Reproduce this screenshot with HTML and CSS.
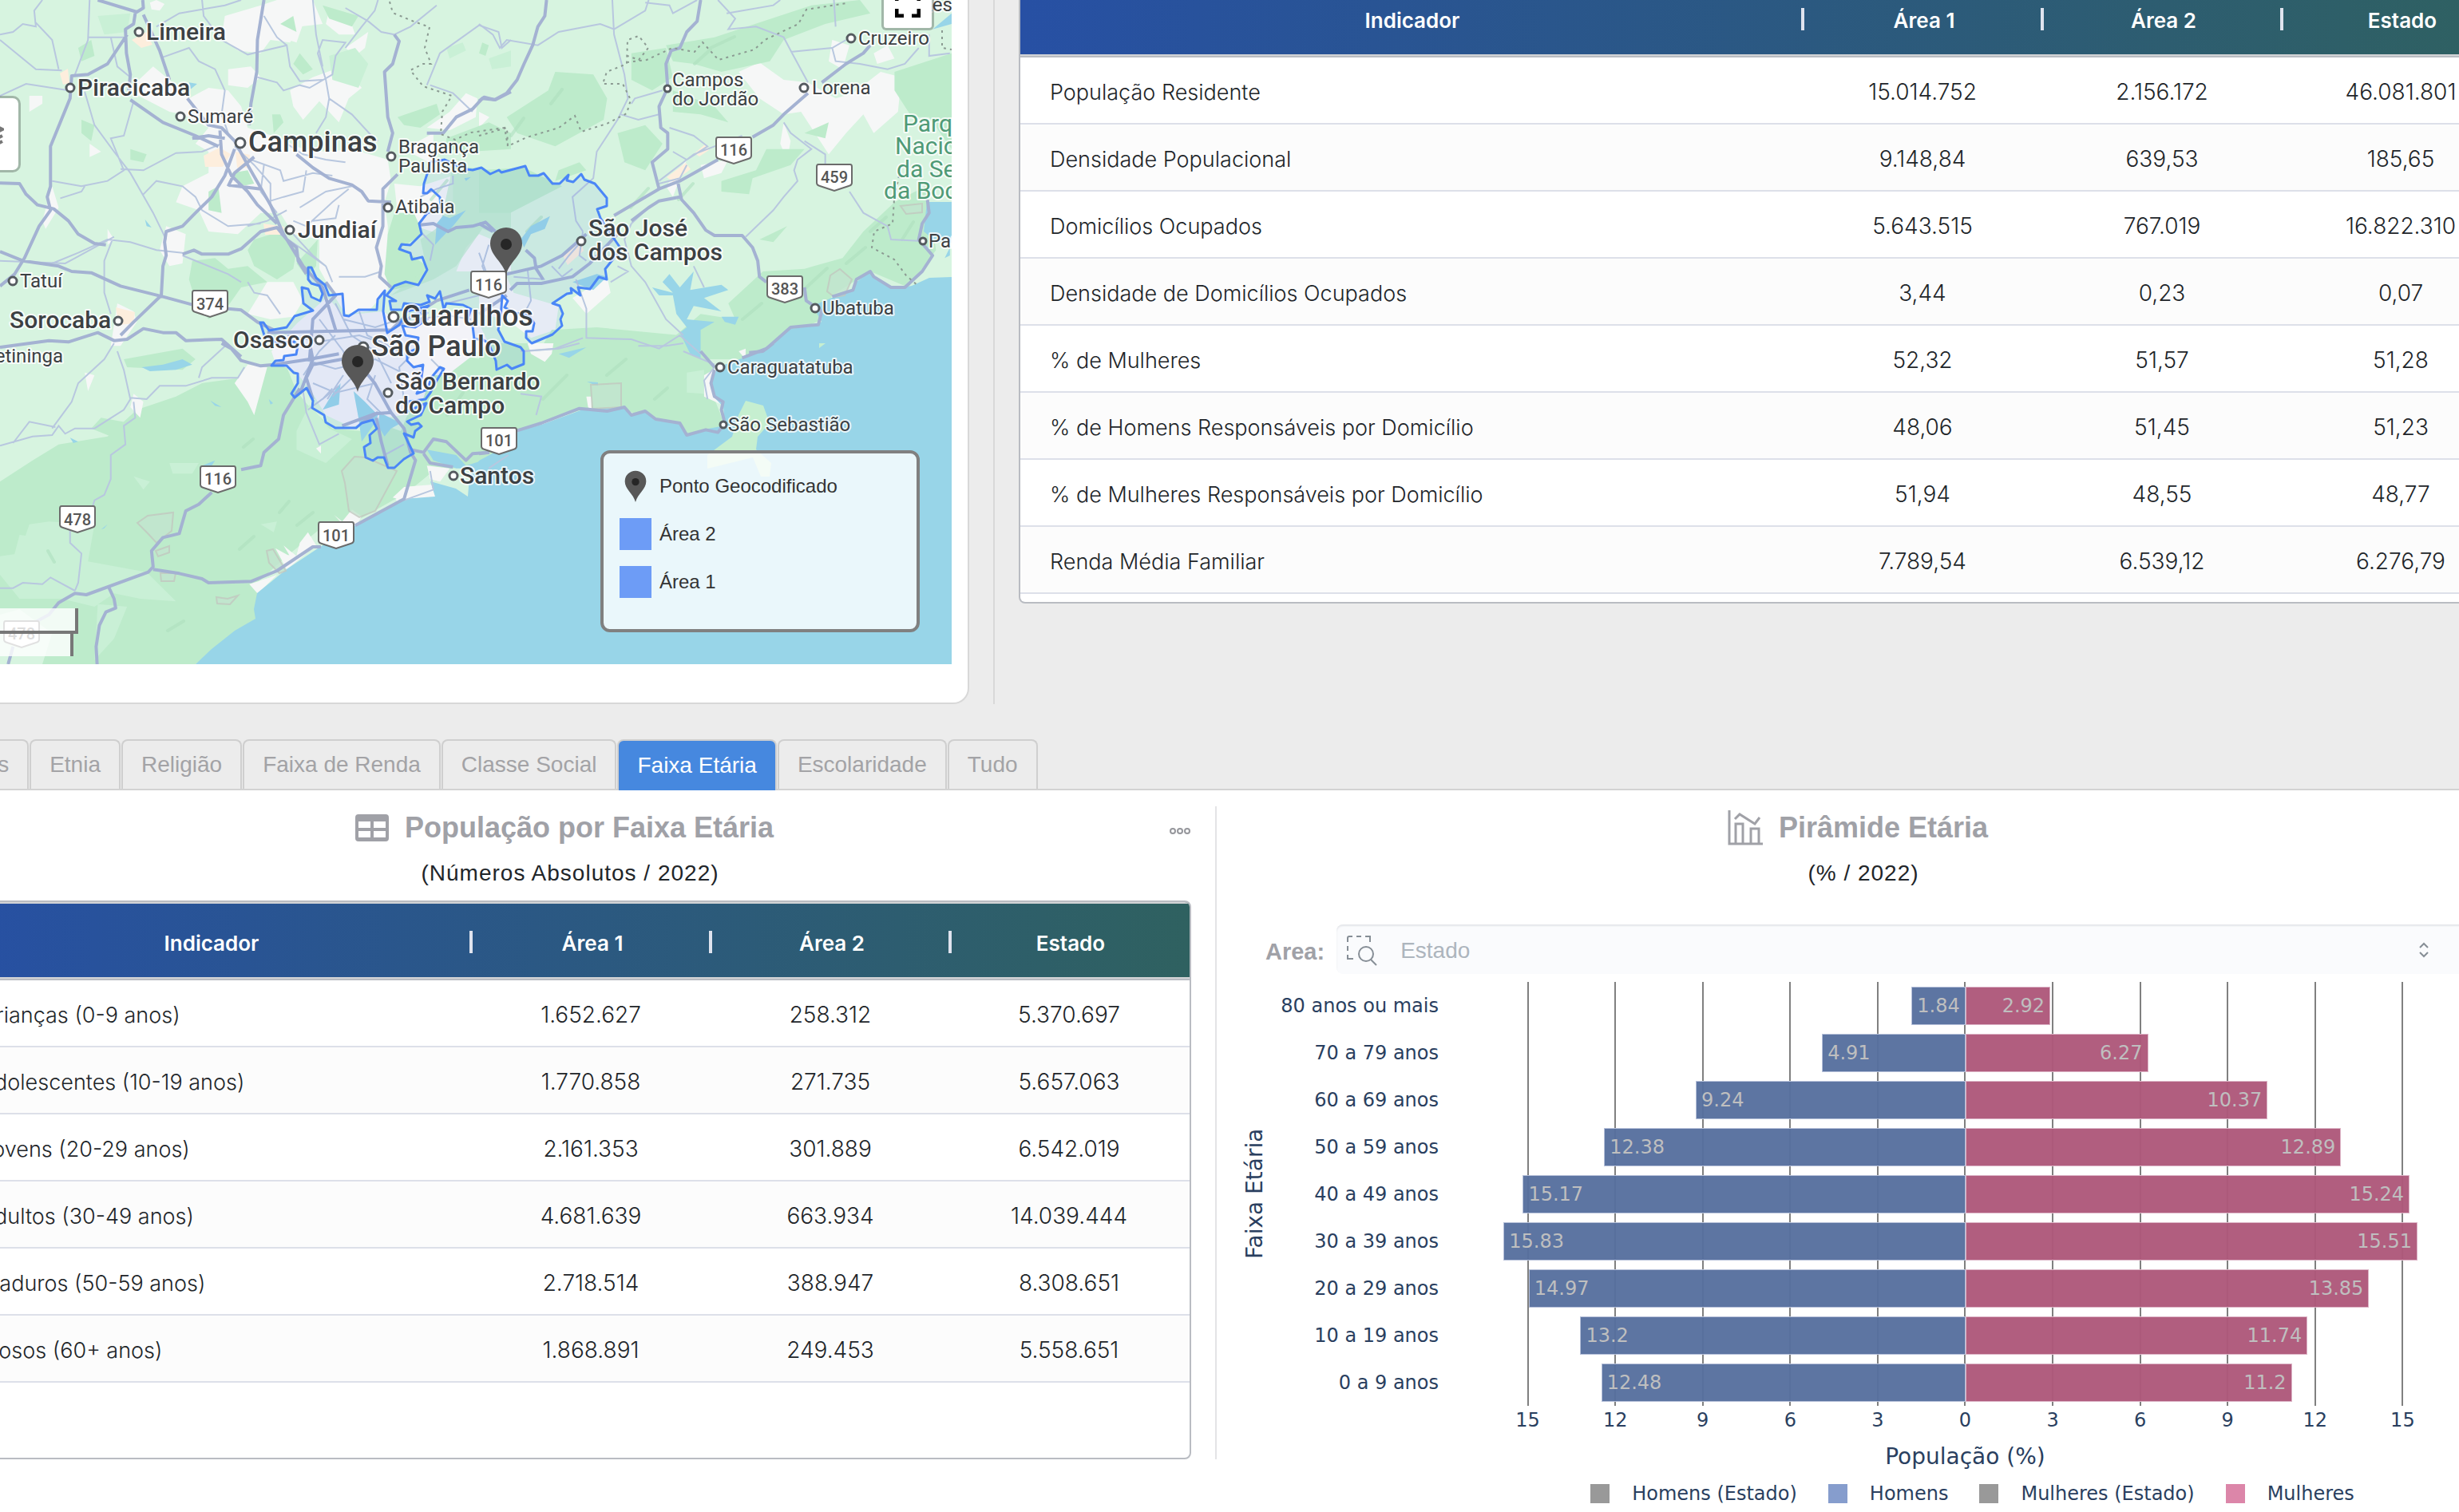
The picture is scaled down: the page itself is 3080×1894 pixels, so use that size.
FILE: index.html
```html
<!DOCTYPE html>
<html lang="pt-BR">
<head>
<meta charset="utf-8">
<title>Faixa Etária</title>
<link rel="stylesheet" href="styles.css">
</head>
<body>
<main class="page">
<section class="overview">
<div class="map-card">
<div class="map">
<svg class="map-art" viewBox="0 0 1192 832" preserveAspectRatio="xMinYMin slice" role="img" aria-label="Mapa de São Paulo">
<defs>
<g id="shield"><path d="M-20-16H20Q22-16 22-13V7Q22 10 18 11L0 17L-18 11Q-22 10-22 7V-13Q-22-16-20-16Z" fill="#fff" stroke="#6b6b6b" stroke-width="2"/></g>
<g id="pin"><path d="M0 0C-4-16-20-24-20-39A20 20 0 0 1 20-39C20-24 4-16 0 0Z" fill="#585858"/><circle cy="-38" r="7" fill="#262626"/></g>
</defs>
<rect width="1192" height="832" fill="#d7f4e0"/>
<!-- clearings -->
<g fill="#f6f7f7">
<g transform="matrix(.40816 0 0 .33333 0 0)">
<path d="M460 10L480 0L505 15L490 40L465 35ZM690 60L800 20L850 0L960 0L990 90L920 100L890 160L830 150L800 200L730 190L680 140ZM1010 40L1070 60L1090 130L1040 130L1000 90ZM1060 180L1130 120L1120 180L1090 210ZM700 260L770 250L800 290L760 330L700 320ZM870 60L930 90L910 160L860 140ZM890 340L960 290L1050 250L1110 330L1070 370L1040 460L980 380L930 450L900 400ZM400 330L470 250L520 300L580 370L640 330L700 340L740 400L760 480L860 520L930 560L1000 570L1080 560L1190 600L1200 680L1180 760L1190 850L1190 1090L1130 1170L1060 1180L1020 1100L980 1010L980 900L900 880L860 800L800 800L730 880L640 870L610 790L540 760L560 700L640 650L640 570L600 540L640 480L560 430L520 420L410 350ZM90 360L130 360L130 390L90 420ZM275 540L310 570L275 590ZM160 700L180 780L140 860L130 830ZM330 860L350 900L330 920ZM510 850L570 880L560 990L520 1000L490 940ZM820 1060L900 1060L930 1130L900 1190L830 1200L760 1180ZM1290 700L1390 660L1390 760L1350 880L1300 860L1220 800L1210 690ZM1430 350L1465 370L1460 440L1380 490L1310 480L1380 420ZM1330 620L1240 560L1330 500ZM360 1140L410 1170L420 1210L370 1300L340 1300Z"/>
<path d="M1470 880L1568 930V1020H1400L1430 930Z"/>
</g>
<g transform="matrix(.43367 0 0 .33333 600 0)">
<path d="M750 270L810 235L880 300L950 310L1030 370L1080 350L1160 270L1220 290L1210 420L1140 500L1110 430L1060 500L1010 580L980 520L930 420L880 430L810 370ZM1020 150L1070 170L1050 260L1010 230ZM1140 200L1180 170L1200 220L1150 240ZM880 460L900 530L890 600L870 540ZM640 620L720 600L700 650L650 670ZM540 700L600 600L560 740ZM0 940L70 1010L100 1100L230 1150L220 1240L150 1270L80 1200L0 1180ZM270 1120L370 1040L380 1100L310 1180ZM140 1290L190 1320L210 1350H130ZM0 420L30 440L0 480ZM280 400L310 440L280 450Z"/>
</g>
<g transform="matrix(.40816 0 0 .33333 0 430)">
<path d="M1205 560L1240 540L1220 600ZM1240 560L1330 530L1335 580L1240 590ZM1310 460L1380 470L1350 520L1320 510ZM1025 645L1050 670L1110 650L1090 690L1060 690ZM920 750L945 710L970 760L880 840L845 770L890 800L870 760L910 800ZM765 905L830 880L850 870L790 940ZM1250 20L1330 30L1300 90ZM1240 0H1370L1330 60L1270 40Z"/>
</g>
</g>
<!-- forests -->
<g fill="#bdebcb">
<g transform="matrix(.40816 0 0 .33333 0 0)">
<path d="M590 980L660 970L700 1010L760 1000L820 1060L740 1080L700 1150L640 1200L600 1130L580 1050ZM780 900L860 870L910 940L900 1010L850 1050L780 1000L760 940ZM1210 800L1270 800L1300 880L1230 930L1310 1000L1280 1070L1200 1090L1180 1030L1190 880ZM1055 240L1085 225L1100 260L1095 300L1060 280ZM835 430L860 430L870 460L840 500ZM1220 440L1340 390L1350 430L1290 480L1240 470ZM400 560L450 580L440 610L400 600ZM920 200L960 260L930 280L900 240ZM640 720L670 700L680 800L640 790ZM1370 520L1500 460L1568 500V560L1440 570L1370 560ZM1480 160L1500 170L1490 210L1470 200ZM250 450L290 470L280 530L250 500ZM240 180L280 150L290 210L250 230ZM710 650L760 640L780 690L740 700ZM910 990L975 900L970 1000L940 1040ZM860 90L900 60L910 120ZM990 20L1100 60L1080 100L1010 70Z"/>
<path opacity=".7" d="M1390 620L1568 650V900L1480 860L1400 1000L1330 1050L1200 1110L1310 1010L1290 900L1350 850Z"/>
</g>
<g transform="matrix(.43367 0 0 .33333 600 0)">
<path d="M680 140L820 80L960 20L1100 0L1130 50L1000 90L880 150L840 230L700 270L620 240L560 230L540 170ZM220 270L330 280L370 370L360 450L220 550L110 500L80 440L200 340ZM440 200L540 180L560 290L500 340L440 300ZM560 340L680 400L720 460L640 430L560 420ZM400 500L480 470L530 540L480 640L420 610ZM230 640L290 610L310 640L220 680ZM700 680L800 640L830 560L940 560L900 620L790 670L780 730L700 720ZM940 500L1010 460L1000 520ZM1200 270L1365 200V560L1300 440L1250 440L1200 340ZM940 1010L1050 970L1110 870L1200 760L1290 700L1320 940L1240 1080L1130 1020L1020 1110L990 1200L850 1290L760 1350H600L560 1270L640 1180L740 1200L720 1140L820 1020ZM810 900L890 850L850 910ZM0 640L130 630L240 700L90 800L0 800ZM210 1240L340 1230L580 1260L640 1350H160Z"/>
</g>
<g transform="matrix(.40816 0 0 .33333 0 430)">
<path d="M0 520L100 440L180 380L330 350L420 250L540 200L620 150L740 130L820 80L880 90L910 180L950 240L1020 320L1110 330L1140 290L1230 330L1280 180L1340 30L1568 80V440L1330 480L1250 560L1090 670L980 700L880 800L790 900L790 1030L600 1206H130L160 1090L60 1000L0 1020ZM380 60L560 20L600 60L560 100L390 90ZM310 280L400 300L380 370L280 320Z"/>
</g>
<path d="M600 430H870L900 470L895 500L908 533L860 545L820 528L780 512L730 513L650 538L600 570Z"/>
</g>
<g fill="#c9f0d6"><g transform="matrix(.40816 0 0 .33333 0 430)">
<path d="M910 330L950 230L1010 320L1080 360L1000 450L910 400ZM520 450L610 450L590 490L530 490ZM90 680L150 670L290 680L270 820L450 860L540 970L430 960L350 940L290 990L190 960L60 960L0 870V800L60 790ZM300 980L390 990L350 1110L290 1190ZM60 720L120 730L70 850L30 860ZM800 680L850 670L840 710ZM410 500L460 520L440 550Z"/>
</g>
<g transform="matrix(.43367 0 0 .33333 600 430)"><path d="M600 110L650 100L650 190L600 185Z"/></g>
<g transform="matrix(.40816 0 0 .33333 0 0)"><path d="M1010 210L1090 180L1130 240L1100 330L1020 300ZM300 60L400 50L390 120L320 130ZM1500 220L1568 190V250L1510 260ZM1370 180L1420 160L1430 190L1380 220Z"/></g></g>
<!-- clearings inside the forests -->
<g fill="#f6f7f7"><g transform="matrix(.40816 0 0 .33333 0 430)"><path d="M760 80L820 90L800 180L780 270L760 220L720 150ZM260 110L290 120L270 180ZM410 190L440 220L430 280L400 240ZM970 395L985 385L985 415ZM1205 580L1240 540L1335 530L1335 580L1240 590ZM1310 460L1380 470L1350 520L1320 510ZM1025 645L1050 670L1080 625L1110 650L1090 690L1060 690ZM920 750L945 710L970 760L880 850L845 770L890 800L870 760L910 800ZM765 905L830 880L850 870L790 940Z"/></g>
<g transform="matrix(.43367 0 0 .33333 600 430)"><path d="M140 0H215L210 40L190 70L150 40ZM650 120L690 90L670 160L700 230L650 200ZM310 200L325 200V250L315 240ZM160 310L210 290L170 330ZM750 30L770 20V60Z"/></g></g>
<!-- São Paulo urban area -->
<path fill="#f3f3f8" d="M340 440L372 405L395 385L410 372L430 395L480 390L500 405L590 385L612 430L560 470L540 470L530 500L505 520L470 525L440 535L408 520L390 490L370 465L345 455Z"/>
<!-- hill shading -->
<g stroke="#aedfbe" stroke-width="4" stroke-linecap="round" opacity=".6" fill="none"><path d="M350 642l12-14M372 658l20-16M300 688l18-16M305 560l12-10M790 260l22-24M850 250l18-20M870 80l20-18M890 60l30-14M640 170l16-22M690 130l14-18M560 520l20-28M680 500l30-30M760 470l24-20M820 500l16-14M930 400l24-20M1010 360l26-24M1060 330l24-20M540 250l20-24M660 290l18-18M210 790l20-12M60 690l8 14M1090 290l20-18M1130 300l14-22"/></g>
<!-- sea and reservoirs -->
<g fill="#98d5e8">
<path d="M1192 347L1164 348L1142 358L1120 362L1099 350L1090 340L1073 353L1068 365L1042 373L1018 383L1029 403L1021 408L990 412L973 423L960 437L934 447L899 460L890 480L895 498L906 510L908 533L882 538L860 545L851 530L821 527L808 516L791 520L782 510L730 513L678 532L648 540L626 563L600 577L588 597L586 622L571 612L539 603L545 622L506 625L445 658L398 687L359 713L322 743L318 763L320 775L294 790L265 813L245 832H1192ZM1192 253H1161L1157 290L1172 302L1192 304Z"/>
<g transform="matrix(.43367 0 0 .33333 600 0)"><path d="M500 1080L560 1100L530 1060L550 1030L580 1080L620 1020L610 1090L700 1070L720 1090L650 1120L700 1170L620 1150L600 1200L680 1210L640 1240L640 1350L610 1330L580 1250L600 1230L570 1180L560 1110L520 1110ZM700 1190L750 1190L740 1220L710 1210ZM120 900L150 850L205 812L190 860L150 880L130 930ZM270 1060L340 1030L370 1040L330 1090ZM230 1330L310 1305L260 1345ZM1310 110L1365 50V90ZM1345 970L1360 930V960Z"/></g>
<g transform="matrix(.40816 0 0 .33333 0 430)"><path d="M435 90L500 80L560 60L590 80L540 100L460 105ZM1020 190L1045 150L1040 230L990 250ZM1085 180L1120 220L1160 270L1150 300L1110 370L1100 280ZM1165 260L1230 300L1200 320L1180 350L1160 310ZM215 355L240 370L225 375ZM310 700L330 680L320 695ZM645 215L680 240L660 235ZM825 210L838 225L830 230ZM620 460L660 440L650 460ZM1310 400L1400 420L1430 460L1510 430L1500 470L1400 470L1330 440Z"/></g>
<g transform="matrix(.40816 0 0 .33333 0 0)"><path d="M580 310L605 315L585 335ZM1340 840L1360 810L1380 820L1430 790L1390 850L1350 900L1335 920ZM445 825L465 855L450 850ZM1425 670L1445 665L1430 680Z"/></g>
<path d="M735 478l14 6v-5z"/>
</g>
<path fill="#c6efd0" d="M934 502L956 508L964 530L949 547L947 563L966 580L964 597L953 597L943 573L886 587L886 570L917 547L925 520ZM1026 430h8l-8 6z"/>
<!-- protected reserves -->
<g fill="#c3e6cf" stroke="#c2c8c0" stroke-width="2" opacity=".8">
<path d="M428 590L444 572L458 573L497 590L470 640L450 648L437 640L432 605ZM172 655L185 646L217 642L215 665L196 680L185 668ZM195 690L212 684L212 692L198 697ZM201 718L220 718L218 728H202ZM334 690L342 688L358 715L350 718L337 705ZM271 748L285 750L298 746L288 757L272 756ZM740 482L778 480V510L742 512ZM1036 365L1040 345L1052 337L1067 350L1058 370L1045 372ZM1128 258L1155 255L1155 266L1135 268Z"/></g>
<!-- urban spots -->
<g fill="#fdeedd"><path d="M255 195l20-10 14 8-10 16-22 0zM295 190l18 4-2 16-14 0zM75 92l10-6 2 18-8 2zM165 50l18-10 8 16-14 4zM330 280l26 4-2 10-22 0zM145 385l24 6-2 14-18 2zM705 320l22-22 4 16-20 18zM835 222l24-18 6 8-22 16zM870 192l14-12 4 8-12 8z"/></g>
<!-- secondary roads -->
<g fill="none" stroke="#b8c7df" stroke-width="2">
<g transform="matrix(.40816 0 0 .33333 0 0)"><path vector-effect="non-scaling-stroke" d="M0 130L40 120L70 90L110 100L105 40L130 0M110 85L160 150L180 260M0 150L110 260L190 265M0 360L80 315L210 340M275 0L270 150L230 280M260 345L290 470L350 570L400 650L470 800L510 900M480 100L550 50L690 20L740 0M620 0L625 60L680 150L760 205L880 170L890 250L920 305L990 300M500 215L580 180L610 230L660 260L690 340L680 430L700 500M340 140L360 250L400 290M270 140L380 140M790 290L850 310L870 340L920 320L950 330L1020 280L1030 210L1060 160L990 150L975 200L1000 300L1010 370L1080 430L1140 510L1160 530M810 60L850 140L880 170M960 0L970 130L990 250M1060 30L1130 80L1170 120L1210 130M1060 180L1110 100L1150 40L1160 0M1210 130L1260 100L1340 20M1010 370L1000 440L970 500M370 635L440 640L540 575L620 570L680 540M410 380L380 510L340 520L380 640L330 680L250 700L160 680M185 745L250 720L260 700M440 730L480 680L560 700L600 740L620 790L700 850L800 840M720 550L780 620L830 690L830 770M880 540L930 580L1000 600L1060 610M940 640L930 720L870 740L830 755M770 600L860 640L870 680L960 650L1020 660M760 850L820 830L880 790M810 620L800 720L850 800M160 990L240 950L330 900L400 910L480 940L560 950M345 900L320 980L320 1100L340 1180M0 980L200 990L230 970L350 890M560 960L620 990L700 1030L740 1060M760 1060L780 1100L820 1110L860 1180M920 780L1000 720L1080 700M1040 770L1030 820L960 830M900 830L940 850L1020 760L1070 710M1040 1040L1120 1040L1170 1020M900 880L960 960L1000 1000L1020 1060M1310 320L1350 200L1470 95L1530 120L1540 180L1568 150M1320 320L1390 350L1450 420M1290 870L1330 920L1320 980M1500 920L1480 1000L1490 1030M1290 740L1340 710L1390 690V660M860 880L920 930L1000 1000"/></g>
<g transform="matrix(.43367 0 0 .33333 600 0)"><path vector-effect="non-scaling-stroke" d="M0 90L40 130L60 180L80 150L170 170L230 120L350 90L390 110L480 40L490 0M480 10L550 20L560 50L630 0M385 0L390 130L420 280L430 370L400 450L340 570L330 670L270 740L280 830L300 870M440 390L450 370L530 340M410 430L460 450L520 430M690 0L740 70L720 110L800 100L880 140L900 190L950 310M715 50L850 20L870 0M900 195L1020 180L1060 150M1020 180L1030 230L1100 240L1180 260L1230 240L1270 180M1025 0L1030 100M550 480L620 510L660 550L600 600L560 570M520 680L620 580L680 550L760 510M520 690L580 670L600 620M880 460L900 500L960 560L920 600L910 640L920 680L880 740L850 790L770 890M940 530L1000 580L1000 620M1070 720L1110 800L1180 850L1190 900L1270 905M440 840L420 900L440 1000L480 1060L540 1200L590 1260M620 1000L650 1080M400 1000L430 1020L380 1060M280 1050L310 1160L310 1270L440 1275L520 1310L580 1260L640 1330M120 1320L220 1310L300 1270M440 840L490 780M230 1010L260 960L300 900M100 1040L190 1050M210 1000L240 1040L270 1010M140 1010L150 1130L130 1180M0 950L20 1020M300 870L290 960L310 980M1300 130V210L1360 200"/></g>
<g transform="matrix(.40816 0 0 .33333 0 430)"><path vector-effect="non-scaling-stroke" d="M350 0L320 60L240 150L220 220L160 320M0 385L100 350L160 345L180 310L200 340L230 320L290 320L380 250L400 210L380 100L360 30M40 375L90 295L170 315M400 205L450 210L490 160L570 160L650 130L730 130L750 90M610 130L620 90L700 0M410 220L415 280L380 310L385 380L340 420L340 510L320 570L290 590L285 610M215 700L215 750L250 790L240 900L230 930M0 920L40 920L70 900L130 905L155 880L230 930M930 180L940 260L980 380L1040 340M945 250L1000 200L1040 160M990 210L1020 170M1080 130L1020 200M1240 590L1330 550L1320 480M1180 420L1240 380M1500 470L1560 420"/></g>
<g transform="matrix(.43367 0 0 .33333 600 430)"><path vector-effect="non-scaling-stroke" d="M130 30L230 20L290 0M460 10L540 10L590 0M590 30L680 80M680 90L650 140L660 210M120 190L180 200L165 270"/></g>
<path d="M360 420L400 428L450 420L480 430M380 450L420 462L470 450L510 470M400 400L430 440L440 470M420 380L440 420L470 440L490 480M392 480L420 492L470 480M410 500L430 470M450 390L460 420L500 440M470 470L460 500L480 520M520 440L500 460L506 500M430 400L470 410L500 400M380 470L400 440L420 420M520 400L560 395L590 400M560 380L600 370L620 365M540 450L560 470L556 490"/>
</g>
<!-- highways -->
<g fill="none" stroke="#a4b2d2" stroke-width="4" stroke-linejoin="round">
<g transform="matrix(.40816 0 0 .33333 0 0)"><path vector-effect="non-scaling-stroke" d="M300 0L420 45L440 30L438 0M415 50L410 90L385 110L388 200L400 280L395 340M440 55L490 190L520 300M400 375L500 460L600 510L670 550M0 945L70 980L180 1000L220 1020L280 1025L370 1075L500 1115L590 1145M390 130L330 240L270 280L220 285L215 370L155 550L155 700L145 740L155 790L120 850L75 970L45 1030L0 1075M0 688L60 690L80 730L115 770L165 785L210 830L240 880L290 915L325 920M810 0L790 150L788 270L770 390L765 470M575 370L640 470L680 480L720 530L760 620L830 770L870 880L930 1000L990 1080L1030 1240M675 490L680 580L710 660L760 720L790 770L850 840M720 560L690 660L650 740L600 800L560 850L510 870L505 910L510 960L500 1000L495 1110L410 1210L370 1260M700 700L720 650L780 590M590 520L640 510L690 520M700 695L800 710M910 580L960 630L1010 670L1080 695L1110 720L1130 755L1200 760M1210 130L1225 155L1205 240L1180 270L1190 440L1205 500L1190 570M1220 655L1175 710L1175 850L1155 930L1170 1000L1165 1040L1200 1080M1310 500L1360 500L1400 440L1450 410L1480 370L1520 375L1568 345M560 955L595 940L620 955L700 955L740 935L800 870L850 855L880 900L910 930L915 980L940 1030M700 1160L740 1165L790 1210L840 1240M0 1305L150 1280L210 1285L300 1250L350 1280L390 1275L440 1235L500 1250L540 1250L570 1280L680 1275L740 1340M820 1250L1000 1245L1200 1240L1340 1130L1440 1090M1290 845L1330 840L1375 870L1400 855L1450 850L1490 835L1520 870M1200 1240L1250 1180M1000 1060L1030 1110L960 1200L950 1350"/></g>
<g transform="matrix(.43367 0 0 .33333 600 0)"><path vector-effect="non-scaling-stroke" d="M195 0L190 60L170 100L155 170L130 240L110 300L80 350L45 375L15 365L0 380M640 0L630 80L600 120L580 180L555 190L540 240L545 330L520 400L525 480L545 500L545 560L500 610L520 710M390 810L520 710L580 680L690 600M790 515L850 470L880 430L950 350M990 310L1060 240L1110 200L1130 170M575 690L585 750L620 800L655 865L680 885L760 885L790 930L805 980L810 1040L830 1060M440 830L490 780L520 755L580 740M80 1030L180 1000L240 960L310 880M90 1090L110 1065L180 1065L270 1040L320 990L400 880M135 940L160 970L165 1010L185 1050M1295 750L1300 800L1280 840L1270 900L1310 960L1280 1020L1230 1080L1190 1080L1140 1040L1130 1020L1090 1050L1080 1090L1020 1115M940 1080L945 1130L990 1170L980 1220L900 1230L830 1310L760 1345M0 840L40 870M0 1180L80 1110"/></g>
<g transform="matrix(.40816 0 0 .33333 0 430)"><path vector-effect="non-scaling-stroke" d="M680 0L710 20L740 65L800 85L840 80M920 170L870 270L855 360L810 410L800 460L740 475M650 560L610 605L570 630L550 715L500 730L465 780L470 840L455 860L265 945L230 940L180 975L150 1020L90 1060M470 850L550 865L620 885L640 900L770 895L850 855L960 765H985M335 920L350 960L355 995L325 1010L305 1060L295 1140L298 1206M40 1140L25 1206M1090 685L1240 585L1275 440L1260 410L1240 320L1200 260L1150 150L1110 90M1155 280L1170 370L1190 460M1260 400L1300 410L1330 360L1370 370L1430 440L1450 415L1500 410M1300 415L1320 450L1390 465M840 80L950 60L1040 40M920 190L960 60L950 0M960 210L940 130L960 80L1050 60M1050 310L1150 265L1200 260M1110 300L1160 260"/></g>
<g transform="matrix(.43367 0 0 .33333 600 430)"><path vector-effect="non-scaling-stroke" d="M850 0L820 30L780 35M680 100L670 150L680 200L705 220L700 250L710 300L690 335L655 325L600 345L580 300L510 285L480 255L440 270L420 240L370 255L290 245L180 300L110 328M0 415L30 410M640 30L680 90"/></g>
</g>
<!-- state borders -->
<g fill="none" stroke="#8b9a92" stroke-width="2" stroke-dasharray="3 5">
<path d="M488 2L492 16L516 26L538 34L532 60L540 80L530 80L514 88L530 108L566 120L554 140L552 168L570 175L590 166L632 160L636 183M600 170L635 160L636 183L660 172L700 160L720 145L728 165L760 155L785 142L790 125L780 105L755 105L760 90L785 80L786 50L800 45L812 60L800 75L786 70M785 78L810 75L842 60L870 65L880 53L900 75L945 62L958 50L1000 30L1010 12L1060 4M1180 38V60L1192 62M1126 220L1120 250L1118 280L1095 290L1092 310L1120 325L1135 345L1150 358"/></g>
<!-- study areas -->
<g fill="#5b8def" fill-opacity=".1" stroke="#4a86f7" stroke-width="3" stroke-linejoin="round">
<path d="M539 203L557 200L573 208L577 205L584 212L592 213L603 210L614 218L625 213L628 216L658 208L663 220L674 220L681 217L692 230L701 230L712 219L710 226L718 228L728 218L732 225L745 230L760 248V258L748 262L752 273L765 293L778 312L758 337L760 350L750 347L739 362L724 360L727 370L715 361L716 367L710 368L692 380L701 383L705 393L702 400L704 408L692 419L666 430L659 423V415L667 415L669 405L663 395L645 392L632 385L636 377L629 370L627 400L624 413L632 428L652 435L656 440V456L641 462L635 457L622 463L621 452L612 430L604 425H594L592 408L584 405L590 387L580 382L559 380L556 388L551 365L545 374L535 370L538 378L527 382L506 380L504 388H490L488 377L496 377L484 370L494 358L508 353L524 357L535 338L529 322L516 325L514 317L500 312L503 306L514 307L528 293L525 280L535 267L552 260L551 247L540 237L535 242H530L531 230L535 218Z"/>
<path d="M386 335H390L396 348L407 357L412 370L429 368L431 395L437 396L449 388L472 388L473 375L482 364L480 390L485 417L500 407L510 390L537 383L520 395L535 392L522 405L535 400L520 410L504 408L508 420L524 423L522 437L510 442V452L518 460L530 457L527 480L522 493L535 488L541 472L551 460L556 462L545 480L539 492L533 500L512 503L506 517L534 505L527 520L510 528L515 532L524 530L528 534L520 540L518 548L506 543L518 568L506 575L494 586H486L481 573H473L467 577L458 573L456 560L464 555L463 545L472 537L467 526L453 530L446 536H420L408 529L406 520L391 511L392 502L384 486L369 498L365 493L373 480V468L368 467L359 458H340L345 452L355 451L356 446L371 444L373 433L369 428L347 430L331 420L326 404H330L337 414L359 410L369 396L392 389L380 380L378 360L386 362L390 372L401 377L404 368L400 358L390 355L386 350Z"/>
</g>
<!-- road shields -->
<g class="shields">
<use href="#shield" x="263" y="380"/><text x="263" y="388">374</text>
<use href="#shield" x="612" y="356"/><text x="612" y="364">116</text>
<use href="#shield" x="919" y="188"/><text x="919" y="195">116</text>
<use href="#shield" x="1045" y="222"/><text x="1045" y="229">459</text>
<use href="#shield" x="983" y="362"/><text x="983" y="369">383</text>
<use href="#shield" x="273" y="600"/><text x="273" y="607">116</text>
<use href="#shield" x="97" y="650"/><text x="97" y="658">478</text>
<use href="#shield" x="421" y="670"/><text x="421" y="678">101</text>
<use href="#shield" x="625" y="552"/><text x="625" y="559">101</text>
<use href="#shield" x="27" y="794"/><text x="27" y="801">478</text>
</g>
<!-- town markers -->
<g fill="#fff" stroke="#555b60" stroke-width="3"><circle cx="174" cy="40" r="5"/><circle cx="88" cy="110" r="5"/><circle cx="226" cy="146" r="5"/><circle cx="301" cy="179" r="6"/><circle cx="490" cy="196" r="5"/><circle cx="486" cy="260" r="5"/><circle cx="363" cy="288" r="5"/><circle cx="16" cy="352" r="5"/><circle cx="148" cy="402" r="5"/><circle cx="400" cy="426" r="5"/><circle cx="493" cy="397" r="6"/><circle cx="455" cy="435" r="6"/><circle cx="486" cy="492" r="5"/><circle cx="568" cy="596" r="5"/><circle cx="728" cy="302" r="5"/><circle cx="836" cy="111" r="4"/><circle cx="1007" cy="110" r="5"/><circle cx="1066" cy="48" r="5"/><circle cx="1156" cy="302" r="4"/><circle cx="1021" cy="386" r="5"/><circle cx="902" cy="460" r="5"/><circle cx="906" cy="532" r="4"/></g>
<g class="places small"><text x="235" y="154">Sumaré</text><text x="499" y="192">Bragança</text><text x="499" y="216">Paulista</text><text x="495" y="267">Atibaia</text><text x="25" y="360">Tatuí</text><text x="79" y="454" text-anchor="end">Itapetininga</text><text x="842" y="108">Campos</text><text x="842" y="132">do Jordão</text><text x="1017" y="118">Lorena</text><text x="1075" y="56">Cruzeiro</text><text x="1153" y="14">Resende</text><text x="1163" y="310">Paraty</text><text x="1030" y="394">Ubatuba</text><text x="911" y="468">Caraguatatuba</text><text x="912" y="540">São Sebastião</text></g>
<g class="places medium"><text x="183" y="50">Limeira</text><text x="97" y="120">Piracicaba</text><text x="373" y="298">Jundiaí</text><text x="12" y="411">Sorocaba</text><text x="292" y="436">Osasco</text><text x="495" y="488">São Bernardo</text><text x="495" y="518">do Campo</text><text x="576" y="606">Santos</text><text x="737" y="296">São José</text><text x="737" y="326">dos Campos</text></g>
<g class="places large"><text x="311" y="190">Campinas</text><text x="503" y="408">Guarulhos</text><text x="465" y="446">São Paulo</text></g>
<g class="places park"><text x="1131" y="165">Parque</text><text x="1121" y="193">Nacional</text><text x="1123" y="222">da Serra</text><text x="1107" y="249">da Bocaina</text></g>
<use href="#pin" x="634" y="344"/><use href="#pin" x="448" y="491"/>
</svg>
<button class="map-btn layers" type="button" aria-label="Camadas"><svg viewBox="0 0 52 52" width="52" height="52"><path d="M2 20L26 8L50 20L26 32ZM2 28L26 40L50 28M2 35L26 47L50 35" fill="none" stroke="#777" stroke-width="4"/></svg></button>
<button class="map-btn fullscreen" type="button" aria-label="Tela cheia"><svg viewBox="0 0 32 32" width="32" height="32"><path d="M2 11V2H11M21 2H30V11M30 21V30H21M11 30H2V21" fill="none" stroke="#000" stroke-width="5"/></svg></button>
<div class="scale"><div class="scale-km"></div><div class="scale-mi"></div></div>
<ul class="legend">
<li><svg class="legend-mark" viewBox="-20 -60 40 60" width="40" height="40"><use href="#pin"/></svg>Ponto Geocodificado</li>
<li><span class="swatch"></span>Área 2</li>
<li><span class="swatch"></span>Área 1</li>
</ul>
</div>
</div>
<div class="rule"></div>
<div class="table-box indicators">
<table>
<colgroup><col><col class="num"><col class="num"><col class="num last"></colgroup>
<thead><tr><th>Indicador</th><th>Área 1</th><th>Área 2</th><th>Estado</th></tr></thead>
<tbody>
<tr><td>População Residente</td><td>15.014.752</td><td>2.156.172</td><td>46.081.801</td></tr>
<tr><td>Densidade Populacional</td><td>9.148,84</td><td>639,53</td><td>185,65</td></tr>
<tr><td>Domicílios Ocupados</td><td>5.643.515</td><td>767.019</td><td>16.822.310</td></tr>
<tr><td>Densidade de Domicílios Ocupados</td><td>3,44</td><td>0,23</td><td>0,07</td></tr>
<tr><td>% de Mulheres</td><td>52,32</td><td>51,57</td><td>51,28</td></tr>
<tr><td>% de Homens Responsáveis por Domicílio</td><td>48,06</td><td>51,45</td><td>51,23</td></tr>
<tr><td>% de Mulheres Responsáveis por Domicílio</td><td>51,94</td><td>48,55</td><td>48,77</td></tr>
<tr><td>Renda Média Familiar</td><td>7.789,54</td><td>6.539,12</td><td>6.276,79</td></tr>
</tbody>
</table>
</div>
</section>
<nav class="tabs">
<button type="button">Domicílios</button><button type="button">Etnia</button><button type="button">Religião</button><button type="button">Faixa de Renda</button><button type="button">Classe Social</button><button type="button" class="active">Faixa Etária</button><button type="button">Escolaridade</button><button type="button">Tudo</button>
</nav>
<section class="details">
<article class="panel age-table">
<h2><svg width="42" height="34" viewBox="0 0 42 34"><path fill="#a0a1a7" fill-rule="evenodd" d="M4 0H38Q42 0 42 4V30Q42 34 38 34H4Q0 34 0 30V4Q0 0 4 0ZM4 9V17H19V9ZM23 9V17H38V9ZM4 21V29H19V21ZM23 21V29H38V21Z"/></svg>População por Faixa Etária</h2>
<p class="subtitle">(Números Absolutos / 2022)</p>
<button class="more" type="button" aria-label="Mais opções"><svg width="28" height="10" viewBox="0 0 28 10"><g fill="none" stroke="#96979c" stroke-width="2"><circle cx="5" cy="5" r="3"/><circle cx="14" cy="5" r="3"/><circle cx="23" cy="5" r="3"/></g></svg></button>
<div class="table-box ages">
<table>
<colgroup><col><col class="num"><col class="num"><col class="num last"></colgroup>
<thead><tr><th>Indicador</th><th>Área 1</th><th>Área 2</th><th>Estado</th></tr></thead>
<tbody>
<tr><td>Crianças (0-9 anos)</td><td>1.652.627</td><td>258.312</td><td>5.370.697</td></tr>
<tr><td>Adolescentes (10-19 anos)</td><td>1.770.858</td><td>271.735</td><td>5.657.063</td></tr>
<tr><td>Jovens (20-29 anos)</td><td>2.161.353</td><td>301.889</td><td>6.542.019</td></tr>
<tr><td>Adultos (30-49 anos)</td><td>4.681.639</td><td>663.934</td><td>14.039.444</td></tr>
<tr><td>Maduros (50-59 anos)</td><td>2.718.514</td><td>388.947</td><td>8.308.651</td></tr>
<tr><td>Idosos (60+ anos)</td><td>1.868.891</td><td>249.453</td><td>5.558.651</td></tr>
</tbody>
</table>
</div>
</article>
<div class="rule"></div>
<article class="panel pyramid">
<h2><svg width="44" height="44" viewBox="0 0 44 44"><g fill="none" stroke="#a0a1a7" stroke-width="3"><path d="M2 0V42H44"/><path d="M10 42V17H19V42M29 42V23H39V42M9 11L15 5L34 17L40 9"/></g></svg>Pirâmide Etária</h2>
<p class="subtitle">(% / 2022)</p>
<div class="picker">
<label for="area">Area:</label>
<div class="select-box">
<svg class="pick-icon" width="38" height="38" viewBox="0 0 38 38" fill="none" stroke="#868e96" stroke-width="2"><path d="M1 8V3Q1 1 3 1H7M12 1H18M23 1H29V8M1 13V19M1 24V29H8"/><circle cx="24" cy="23" r="9"/><path d="M30 30L37 37"/></svg>
<select id="area"><option>Estado</option></select>
<svg class="pick-arrows" width="14" height="20" viewBox="0 0 14 20" fill="none" stroke="#868e96" stroke-width="2"><path d="M2 7L7 2L12 7M2 13L7 18L12 13"/></svg>
</div>
</div>
<div class="chart">
<div class="y-title">Faixa Etária</div>
<div class="y-labels"><span>80 anos ou mais</span><span>70 a 79 anos</span><span>60 a 69 anos</span><span>50 a 59 anos</span><span>40 a 49 anos</span><span>30 a 39 anos</span><span>20 a 29 anos</span><span>10 a 19 anos</span><span>0 a 9 anos</span></div>
<div class="plot">
<div class="grid-lines"><i></i><i></i><i></i><i></i><i></i><i></i><i></i><i></i><i></i><i></i><i></i></div>
<div class="bars">
<div class="bar men" style="--v:1.84">1.84</div><div class="bar women" style="--v:2.92">2.92</div>
<div class="bar men" style="--v:4.91">4.91</div><div class="bar women" style="--v:6.27">6.27</div>
<div class="bar men" style="--v:9.24">9.24</div><div class="bar women" style="--v:10.37">10.37</div>
<div class="bar men" style="--v:12.38">12.38</div><div class="bar women" style="--v:12.89">12.89</div>
<div class="bar men" style="--v:15.17">15.17</div><div class="bar women" style="--v:15.24">15.24</div>
<div class="bar men" style="--v:15.83">15.83</div><div class="bar women" style="--v:15.51">15.51</div>
<div class="bar men" style="--v:14.97">14.97</div><div class="bar women" style="--v:13.85">13.85</div>
<div class="bar men" style="--v:13.2">13.2</div><div class="bar women" style="--v:11.74">11.74</div>
<div class="bar men" style="--v:12.48">12.48</div><div class="bar women" style="--v:11.2">11.2</div>
</div>
</div>
<div class="x-axis"><span>15</span><span>12</span><span>9</span><span>6</span><span>3</span><span>0</span><span>3</span><span>6</span><span>9</span><span>12</span><span>15</span></div>
<div class="x-title">População (%)</div>
<ul class="keys"><li><i class="grey"></i>Homens (Estado)</li><li><i class="blue"></i>Homens</li><li><i class="grey"></i>Mulheres (Estado)</li><li><i class="pink"></i>Mulheres</li></ul>
</div>
</article>
</section>
</main>
</body>
</html>
```
FILE: styles.css
```css
* { box-sizing: border-box; }
body { margin: 0; background: #ececec; color: #212529; font-family: "Liberation Sans", Arial, sans-serif; font-size: 28px; overflow: hidden; }
button { font: inherit; cursor: pointer; }
.page { width: calc(100% + 80px); min-height: 100vh; display: flex; flex-direction: column; }

/* overview row */
.overview { display: grid; grid-template-columns: 1214fr 2px 1884fr; column-gap: 30px; align-items: start; }
.rule { align-self: stretch; background: #d8d8d8; }
.map-card { background: #fff; border: solid #d8d8d8; border-width: 0 2px 2px 0; border-radius: 0 0 20px 0; padding: 0 20px 48px 0; }
.map { position: relative; overflow: hidden; height: 832px; }
.map-art { display: block; width: 100%; height: 100%; }
.places { font-family: Roboto, sans-serif; fill: #3c4043; stroke: #fff; stroke-width: 4px; stroke-opacity: .8; paint-order: stroke; stroke-linejoin: round; font-weight: 500; }
.small { font-size: 24px; font-weight: 400; }
.medium { font-size: 30px; }
.large { font-size: 36px; }
.park { font-size: 30px; fill: #4f9a76; font-weight: 400; }
.shields text { font: 500 20px Roboto, sans-serif; fill: #555; text-anchor: middle; }
.map-btn { position: absolute; background: #fff; background-clip: padding-box; border: 3px solid rgba(0, 0, 0, .25); display: flex; padding: 0; }
.layers { left: -68px; top: 120px; width: 94px; height: 96px; border-radius: 10px; align-items: center; justify-content: center; }
.fullscreen { right: 22px; top: -26px; width: 66px; height: 64px; border-radius: 6px; align-items: center; justify-content: center; }
.scale { position: absolute; left: 0; bottom: 10px; }
.scale > div { background: rgba(255, 255, 255, .8); border: 0 solid #777; border-right-width: 4px; }
.scale-km { width: 98px; height: 32px; }
.scale-mi { width: 92px; height: 28px; }
.scale .scale-km { border-bottom-width: 4px; }
.legend { position: absolute; right: 40px; bottom: 40px; width: 400px; height: 228px; margin: 0; padding: 14px 20px; list-style: none; background: rgba(255, 255, 255, .8); border: 4px solid #808080; border-radius: 12px; font-size: 24px; color: #333; }
.legend li { display: flex; align-items: center; gap: 10px; height: 60px; padding-bottom: 6px; }
.swatch { width: 40px; height: 40px; background: #6d9cf6; }

/* data tables */
.table-box { background: #fff; border: 2px solid #b9bcc2; border-radius: 8px; overflow: hidden; font-family: Inter, "Noto Sans", sans-serif; }
table { width: 100%; table-layout: fixed; border-collapse: separate; border-spacing: 0; }
.num { width: 300px; }
.last { width: 298px; }
thead { background: linear-gradient(90deg, #2750a4, #2f6160); }
th { height: 96px; padding: 6px 0 0; color: #fff; font-size: 26px; font-weight: 600; border: solid #d3d4d6; border-width: 2px 0; box-shadow: 0 2px #b9bcc2; background: linear-gradient(#dfe3ee, #dfe3ee) right 34px / 4px 28px no-repeat; }
th:last-child { background: none; }
td { height: 84px; padding: 4px 4px 0 0; text-align: center; font-size: 28px; font-weight: 300; border-bottom: 2px solid #dde0e9; }
td:first-child { text-align: left; padding-left: 37px; font-size: 27px; }
tbody tr:nth-child(even) { background: #fcfcfc; }
tbody::before { content: ""; display: block; height: 2px; }
.indicators { border-top: 0; border-radius: 0 0 8px 8px; padding-bottom: 10px; }
.indicators th { height: 70px; padding: 0 0 18px; border-top: 0; background-position: right 10px; }

/* tabs */
.tabs { display: flex; gap: 1px; margin: 44px 0 0 -143px; border-bottom: 2px solid #d3d3d3; }
.tabs button { height: 62px; padding: 0 23px; background: #ececec; border: 2px solid #cfcfcf; border-bottom: 0; border-radius: 8px 8px 0 0; color: #a3a3a6; white-space: nowrap; }
.tabs .active { background: #4688df; color: #fff; height: 64px; margin-bottom: -2px; }

/* lower panels */
.details { flex: 1; display: grid; grid-template-columns: 1492fr 2px 1606fr; column-gap: 30px; padding-top: 20px; background: #fff; align-items: start; }
.details .rule { height: 818px; background: #e4e4e6; }
.panel { position: relative; min-width: 0; }
h2 { margin: 0; height: 54px; padding-right: 14px; display: flex; align-items: center; justify-content: center; gap: 20px; color: #a0a1a7; font-size: 36px; font-weight: 700; }
.subtitle { margin: 12px 0 0; line-height: 36px; text-align: center; letter-spacing: 1px; }
.age-table { margin-left: -64px; }
.more { position: absolute; right: 0; top: 26px; padding: 0; border: 0; background: none; display: flex; }
.ages { margin-top: 16px; height: 700px; }
.pyramid { padding-right: 46px; }
.picker { display: flex; align-items: center; gap: 15px; margin-top: 46px; padding-left: 31px; }
.picker label { color: #a0a1a7; font-size: 29px; font-weight: 700; padding-top: 6px; }
.select-box { position: relative; flex: 1; }
select { display: block; width: 100%; height: 62px; padding: 2px 80px 0; border: 0; border-radius: 8px; background: #fafbfd; box-shadow: inset 0 2px 2px #e4e6e9; color: #adb5bd; font: inherit; appearance: none; }
.pick-icon { position: absolute; left: 13px; top: 14px; }
.pick-arrows { position: absolute; right: 71px; top: 22px; }

/* age pyramid */
.chart { display: grid; grid-template-columns: 36px 225px 1fr; margin-top: 10px; padding-right: 6px; font-family: Verdana, "DejaVu Sans", sans-serif; font-size: 24px; color: #2a3f5f; }
.y-title { writing-mode: vertical-rl; transform: rotate(180deg); text-align: center; font-size: 28px; line-height: 36px; }
.y-labels { display: grid; grid-auto-rows: 59px; align-items: center; text-align: right; padding-right: 13px; }
.plot { position: relative; }
.grid-lines { position: absolute; inset: 0 3.39%; display: grid; grid-template-columns: repeat(11, 1fr); justify-items: center; }
.grid-lines i { width: 2px; background: #808080; }
.bars { position: relative; display: grid; grid-template-columns: 1fr 1fr; grid-auto-rows: 59px; align-items: center; }
.bar { width: calc(var(--v) / 17.7 * 100%); height: 48px; display: flex; align-items: center; padding: 0 6px; color: #bfbfbf; border: 1px solid #b6c0d9; }
.men { justify-self: end; background: rgba(86, 111, 158, .96); }
.women { justify-content: flex-end; background: rgba(174, 87, 122, .96); border-color: #dcb4c6; }
.x-axis, .x-title, .keys { grid-column: 3; }
.x-axis { display: grid; grid-template-columns: repeat(11, 1fr); margin: 0 3.39%; text-align: center; line-height: 36px; }
.x-title { text-align: center; font-size: 28px; line-height: 32px; margin-top: 12px; }
.keys { display: flex; justify-content: center; gap: 39px; margin: 14px 0 0; padding: 0 0 0 18px; list-style: none; line-height: 32px; }
.keys li { display: flex; align-items: center; gap: 28px; }
.keys i { width: 24px; height: 24px; }
.grey { background: #999; }
.blue { background: #869dcd; }
.pink { background: #dc86a9; }
```
